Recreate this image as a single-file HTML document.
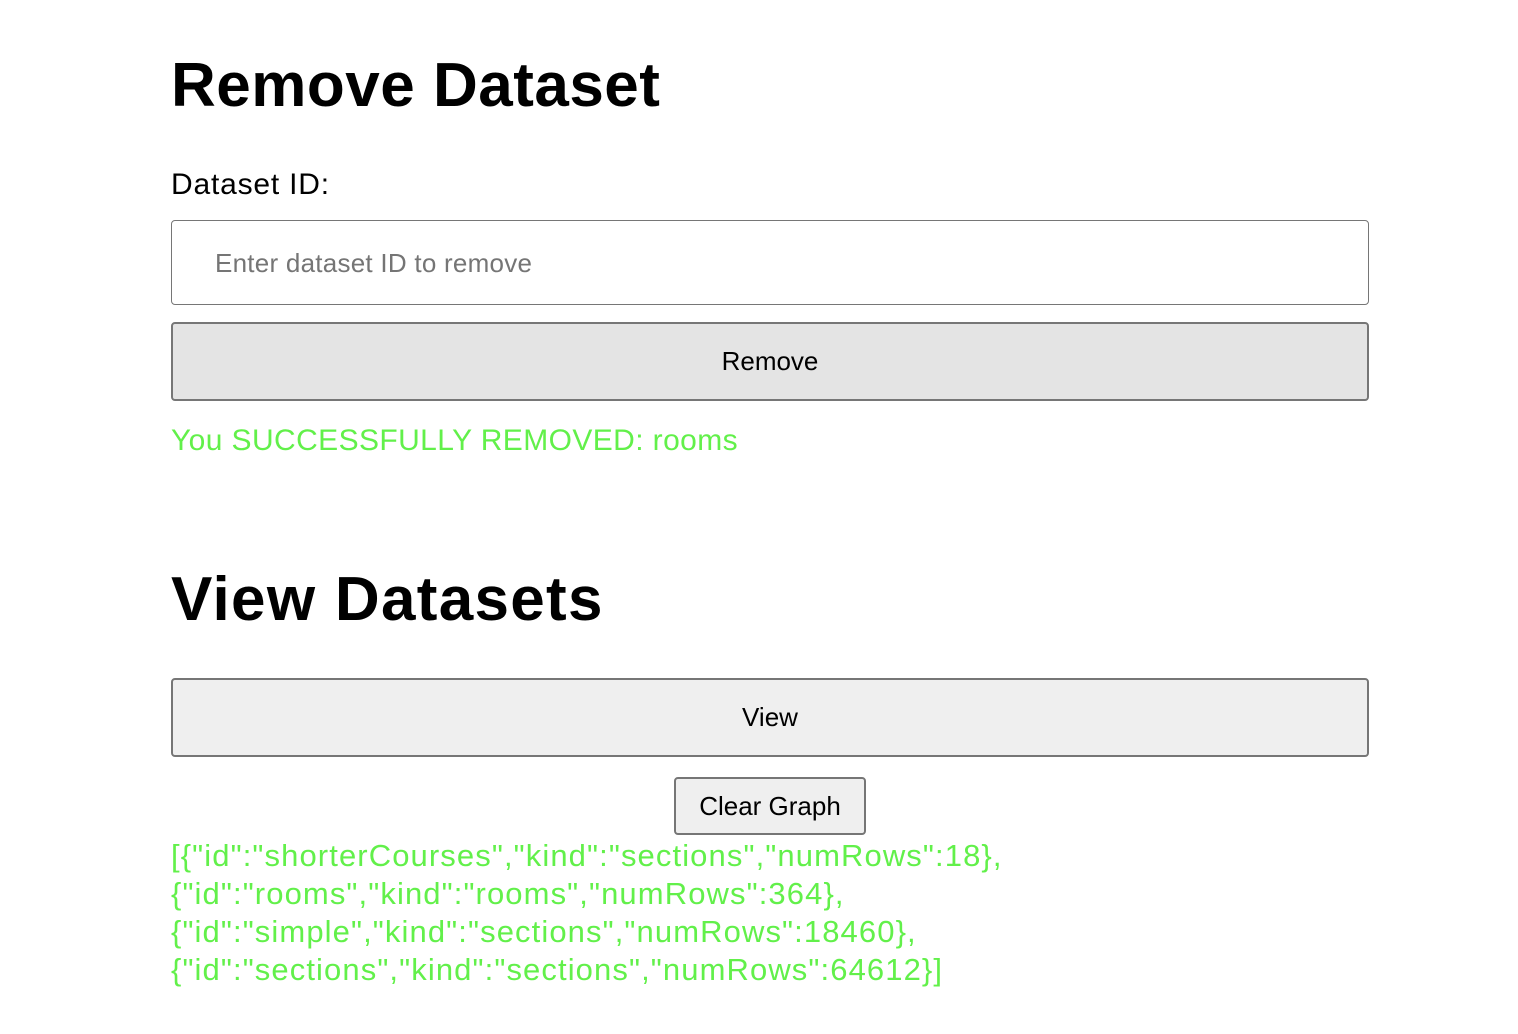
<!DOCTYPE html>
<html><head><meta charset="utf-8"><style>
html,body{margin:0;padding:0;background:#fff;}
body{font-family:"Liberation Sans",Arial,sans-serif;color:#000;width:1518px;height:1034px;overflow:hidden;position:relative;}
.a{position:absolute;}
h1{position:absolute;margin:0;font-size:62px;font-weight:bold;letter-spacing:0.5px;line-height:1;}
.box{position:absolute;left:171px;width:1198px;box-sizing:border-box;border:2px solid #767676;border-radius:4px;}
.btn{display:flex;align-items:center;justify-content:center;font-size:26px;}
.g{color:#62f04a;font-size:30px;}
</style></head><body>
<h1 style="left:171px;top:55px;">Remove Dataset</h1>
<div class="a" style="left:171px;top:168px;font-size:30px;letter-spacing:0.8px;">Dataset ID:</div>
<div class="box" style="top:220px;height:85px;border-width:1.5px;"><span class="a" style="left:43px;top:27px;font-size:26px;color:#757575;letter-spacing:0.25px;">Enter dataset ID to remove</span></div>
<div class="box btn" style="top:322px;height:79px;background:#e4e4e4;">Remove</div>
<div class="a g" style="left:171px;top:424px;letter-spacing:0.4px;">You SUCCESSFULLY REMOVED: rooms</div>
<h1 style="left:171px;top:569px;letter-spacing:1.3px;">View Datasets</h1>
<div class="box btn" style="top:678px;height:79px;background:#efefef;">View</div>
<div class="a btn" style="left:674px;top:777px;width:192px;height:58px;box-sizing:border-box;border:2px solid #767676;border-radius:4px;background:#efefef;">Clear Graph</div>
<div class="a g" style="left:171px;top:837px;line-height:38px;font-size:31px;letter-spacing:1.1px;">[{"id":"shorterCourses","kind":"sections","numRows":18},<br>{"id":"rooms","kind":"rooms","numRows":364},<br>{"id":"simple","kind":"sections","numRows":18460},<br>{"id":"sections","kind":"sections","numRows":64612}]</div>
</body></html>
